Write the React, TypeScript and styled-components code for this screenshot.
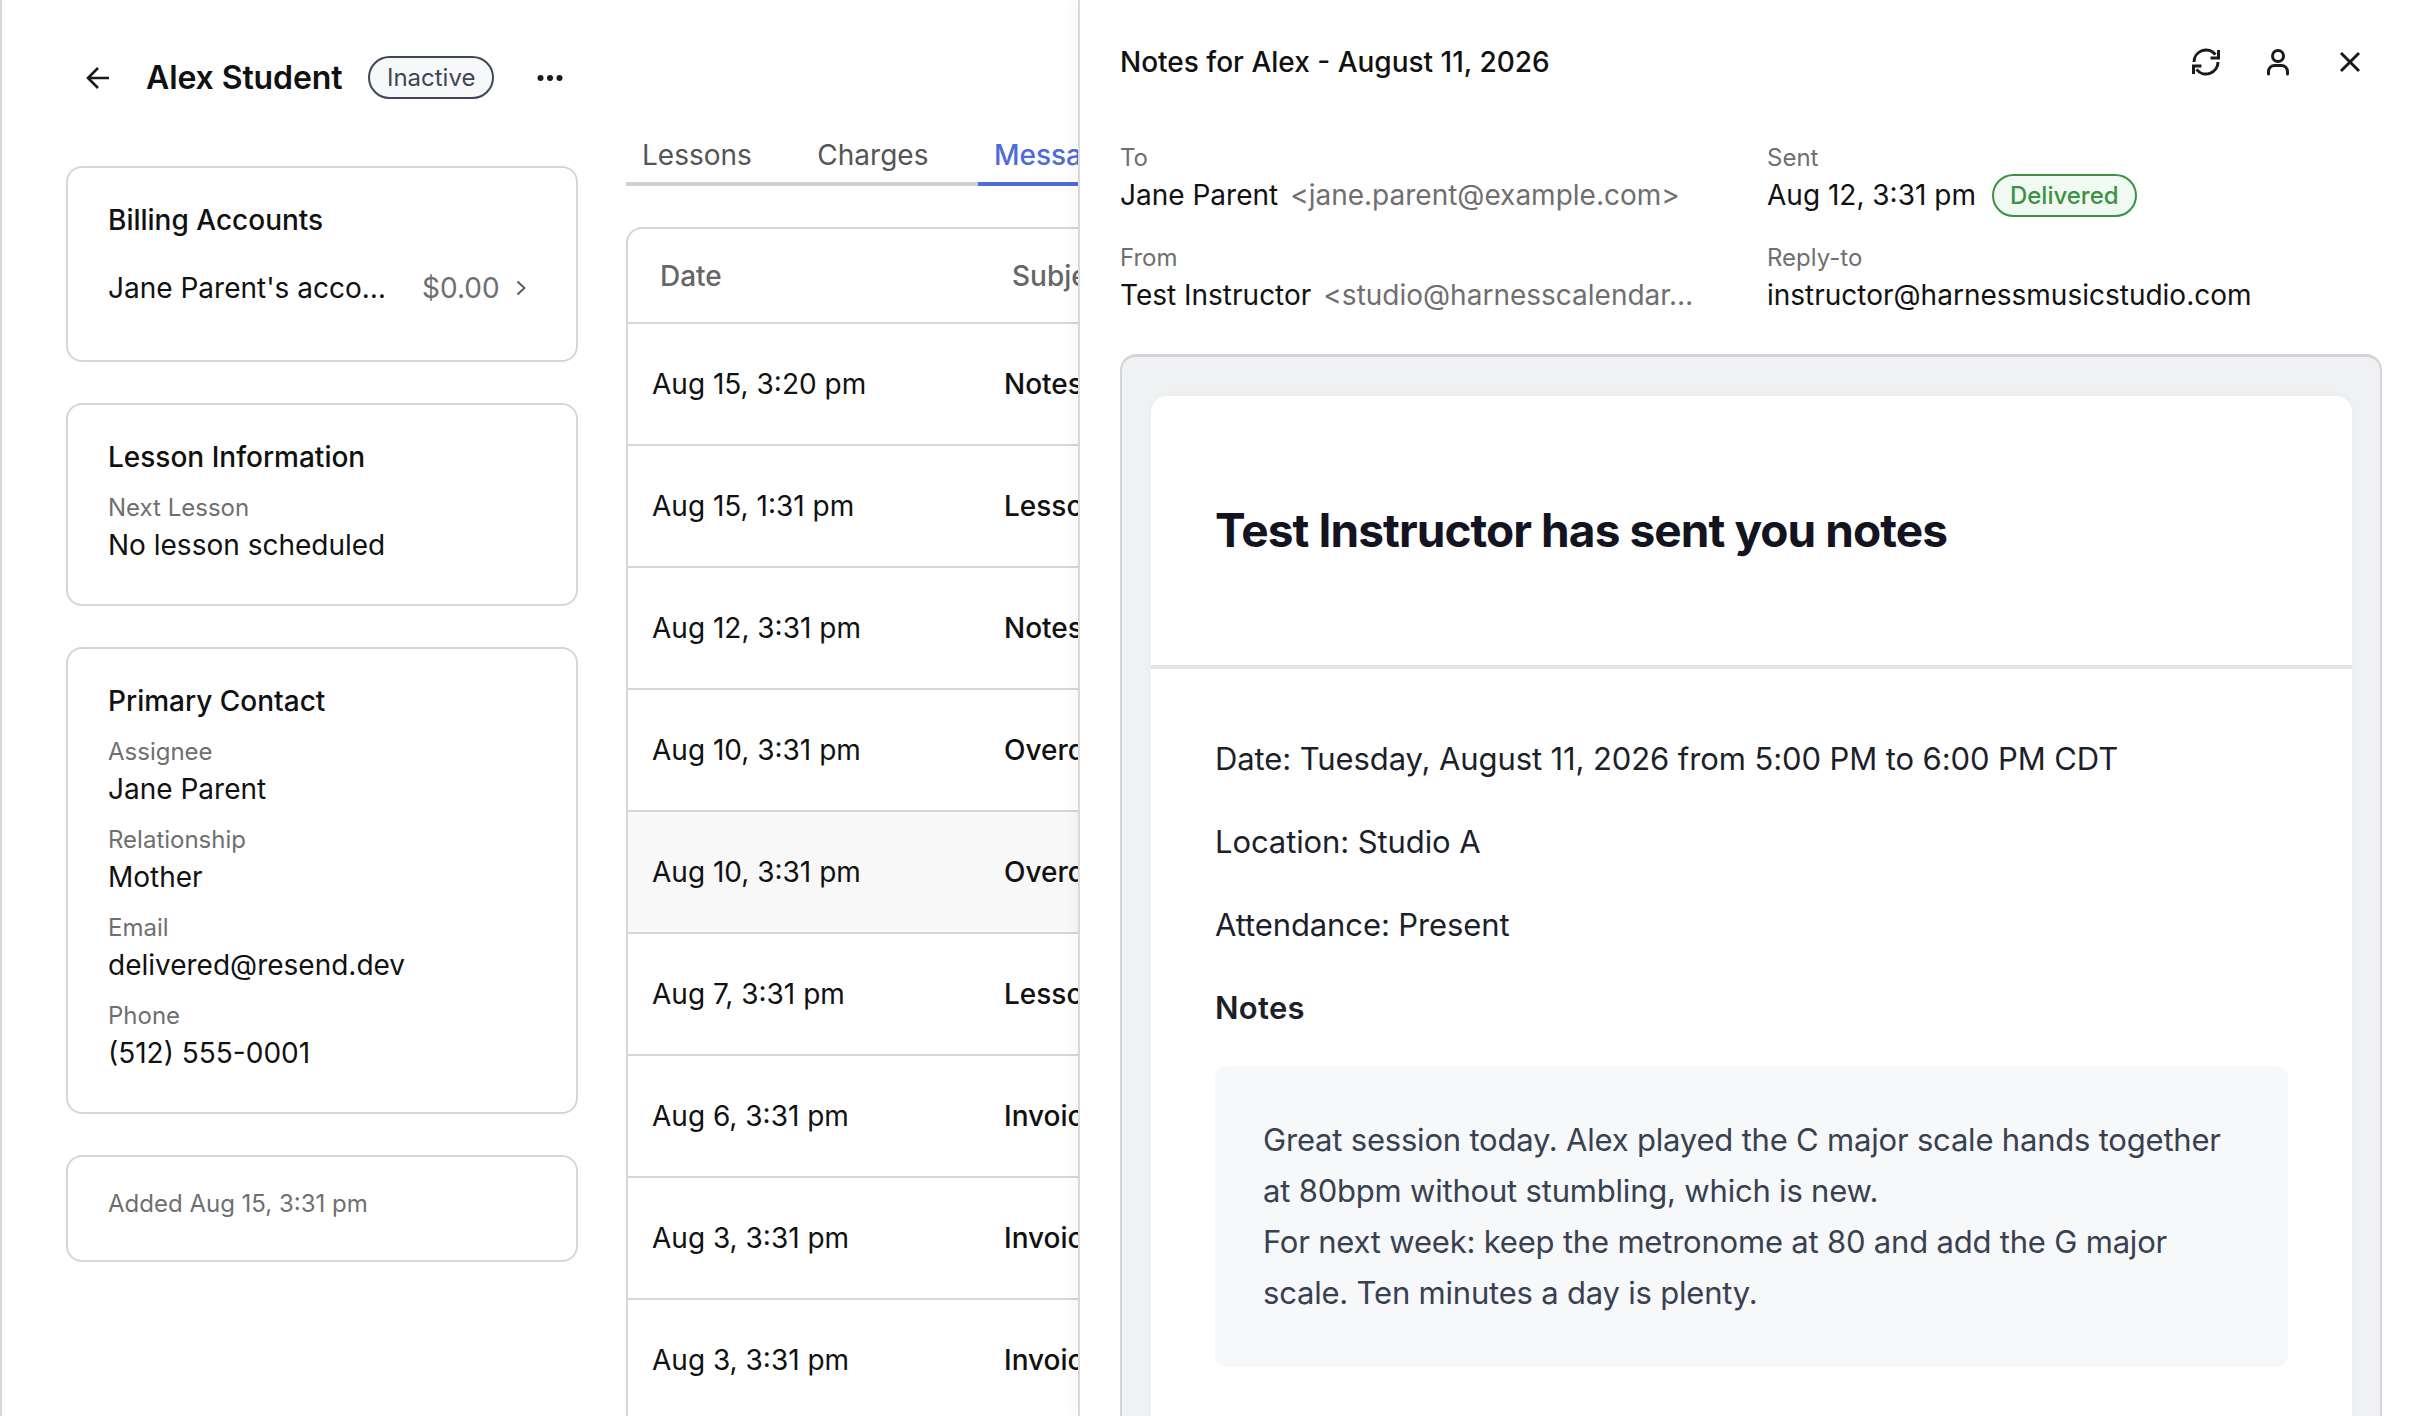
import React from "react";
import styled, { createGlobalStyle } from "styled-components";

const GlobalStyle = createGlobalStyle`
  * {
    box-sizing: border-box;
  }
  html,
  body {
    margin: 0;
    padding: 0;
    background: #fff;
    font-family: Inter, "Liberation Sans", sans-serif;
    color: #111;
  }
`;

const Page = styled.div`
  position: relative;
  width: 2418px;
  height: 1416px;
  overflow: hidden;
  background: #fff;
`;

const Main = styled.div`
  height: 100%;
  border-left: 2px solid #d6d6d6;
  padding: 56px 0 0 64px;
`;

const TitleRow = styled.div`
  display: flex;
  align-items: center;
  height: 43px;
`;

const BackBtn = styled.div`
  display: flex;
  align-items: center;
  width: 80px;
  padding-left: 20px;
`;

const Name = styled.div`
  font-size: 32px;
  font-weight: 600;
  letter-spacing: -0.1px;
  line-height: 43px;
  margin-right: 26px;
`;

const Badge = styled.div<{ $green?: boolean }>`
  display: inline-flex;
  align-items: center;
  justify-content: center;
  height: 43px;
  padding: 0 ${(p) => (p.$green ? 16 : 16.5)}px;
  border-radius: 22px;
  font-size: 24px;
  font-weight: ${(p) => (p.$green ? 500 : 400)};
  color: ${(p) => (p.$green ? "#3d9144" : "#3f4657")};
  background: ${(p) => (p.$green ? "#f0faf2" : "#f7f8fa")};
  border: 2.5px solid ${(p) => (p.$green ? "#3d9144" : "#3f4657")};
`;

const MoreBtn = styled.div`
  display: flex;
  margin-left: 43px;
`;

const Body = styled.div`
  display: flex;
  gap: 48px;
`;

const Sidebar = styled.div`
  width: 512px;
  flex: none;
  display: flex;
  flex-direction: column;
  gap: 41px;
  padding-top: 67px;
`;

const Card = styled.div`
  border: 2px solid #d6d6d6;
  border-radius: 16px;
  padding: 34px 40px 41px;
`;

const FootCard = styled(Card)`
  height: 107px;
  padding: 0 40px 10px;
  display: flex;
  align-items: center;
  font-size: 24px;
  color: #6f6f6f;
`;

const CardTitle = styled.div`
  font-size: 28px;
  font-weight: 500;
  line-height: 36px;
`;

const AccountRow = styled.div`
  display: flex;
  align-items: center;
  height: 36px;
  margin: 32px 0 13px;
  font-size: 28px;
`;

const AccountName = styled.div`
  width: 278px;
  flex: none;
  white-space: nowrap;
  overflow: hidden;
  text-overflow: ellipsis;
`;

const Amount = styled.div`
  margin-left: 36px;
  color: #6f6f6f;
`;

const Chevron = styled.svg`
  margin-left: 16px;
`;

const Field = styled.div`
  margin-top: 17px;
`;

const FieldLabel = styled.div`
  font-size: 24px;
  line-height: 32px;
  color: #6f6f6f;
`;

const FieldValue = styled.div`
  font-size: 28px;
  line-height: 36px;
  margin-top: 3px;
`;

const Content = styled.div`
  flex: 1;
  min-width: 0;
`;

const Tabs = styled.div`
  display: flex;
  margin-top: 31px;
  height: 56px;
  border-bottom: 4px solid #d0d0d0;
`;

const Tab = styled.div<{ $active?: boolean }>`
  height: 56px;
  padding: 0 16px;
  margin-right: 33.5px;
  font-size: 28px;
  font-weight: ${(p) => (p.$active ? 500 : 400)};
  line-height: 50px;
  color: ${(p) => (p.$active ? "#4f6bd8" : "#555")};
  ${(p) => (p.$active ? "border-bottom: 4px solid #4f6bd8;" : "")}
`;

const Table = styled.div`
  margin-top: 41px;
  width: 1100px;
  border: 2px solid #d6d6d6;
  border-bottom: none;
  border-radius: 16px 0 0 0;
`;

const HeadRow = styled.div`
  display: grid;
  grid-template-columns: 352px 1fr;
  height: 95px;
  padding-left: 32px;
  align-items: center;
  font-size: 28px;
  font-weight: 500;
  color: #666;
  border-bottom: 2px solid #d6d6d6;
`;

const Row = styled.div<{ $hover?: boolean }>`
  display: grid;
  grid-template-columns: 352px 1fr;
  height: 122px;
  padding-left: 24px;
  align-items: center;
  font-size: 28px;
  background: ${(p) => (p.$hover ? "#f8f8f8" : "#fff")};
  border-bottom: 2px solid #d6d6d6;
`;

const Subject = styled.div`
  font-weight: 500;
`;

const Panel = styled.div`
  position: absolute;
  top: 0;
  bottom: 0;
  left: 1078px;
  right: 0;
  background: #fff;
  border-left: 2px solid #d9d9d9;
  box-shadow: -5px 0 10px rgba(0, 0, 0, 0.03);
  padding: 48px 36px 0 40px;
  overflow: hidden;
`;

const PanelHead = styled.div`
  display: flex;
  align-items: center;
  justify-content: space-between;
  height: 28px;
  padding-right: 18px;
`;

const PanelTitle = styled.div`
  font-size: 28px;
  font-weight: 500;
`;

const IconGroup = styled.div`
  display: flex;
  gap: 44px;
`;

const Icon = styled.svg`
  display: block;
  fill: none;
  stroke: #1a1a1a;
  stroke-width: 3;
`;

const Meta = styled.div`
  display: grid;
  grid-template-columns: 578px auto;
  column-gap: 69px;
  row-gap: 29px;
  margin-top: 66px;
`;

const MetaValue = styled.div`
  display: flex;
  align-items: center;
  gap: 12px;
  height: 36px;
  margin-top: 3px;
  font-size: 28px;
  white-space: nowrap;
`;

const Address = styled.span`
  min-width: 0;
  overflow: hidden;
  text-overflow: ellipsis;
  color: #6f6f6f;
`;

const SentBadge = styled(Badge)`
  margin-left: 4px;
`;

const Frame = styled.div`
  margin-top: 41px;
  height: 1100px;
  padding: 39px 28px 0 29px;
  background: #f0f1f3;
  border: 2px solid #d4d4d6;
  border-top-width: 3px;
  border-bottom: none;
  border-radius: 16px 16px 0 0;
`;

const Mail = styled.div`
  height: 100%;
  background: #fff;
  border-radius: 16px 16px 0 0;
  box-shadow: 0 0 8px rgba(0, 0, 0, 0.03);
`;

const MailHead = styled.div`
  display: flex;
  align-items: center;
  height: 273px;
  padding: 0 64px 1px;
  border-bottom: 4px solid #e2e4ea;
`;

const MailTitle = styled.div`
  font-size: 46px;
  font-weight: 700;
  letter-spacing: -0.92px;
  color: #13141f;
`;

const MailBody = styled.div`
  padding: 70px 64px 0;
  color: #1d1f2b;
  font-size: 31px;
`;

const MailLine = styled.div<{ $bold?: boolean }>`
  line-height: 40px;
  margin-bottom: 43px;
  font-weight: ${(p) => (p.$bold ? 600 : 400)};
  letter-spacing: ${(p) => (p.$bold ? "0.3px" : "-0.1px")};
`;

const NoteBox = styled.div`
  margin-top: -5px;
  padding: 48px 48px 49px;
  background: #f7f8fa;
  border-radius: 12px;
  font-size: 31px;
  letter-spacing: -0.2px;
  line-height: 51px;
  color: #374151;
`;

const rows = [
  ["Aug 15, 3:20 pm", "Notes"],
  ["Aug 15, 1:31 pm", "Lesson"],
  ["Aug 12, 3:31 pm", "Notes"],
  ["Aug 10, 3:31 pm", "Overdue"],
  ["Aug 10, 3:31 pm", "Overdue"],
  ["Aug 7, 3:31 pm", "Lesson"],
  ["Aug 6, 3:31 pm", "Invoice"],
  ["Aug 3, 3:31 pm", "Invoice"],
  ["Aug 3, 3:31 pm", "Invoice"],
];

const contact = [
  ["Assignee", "Jane Parent"],
  ["Relationship", "Mother"],
  ["Email", "delivered@resend.dev"],
  ["Phone", "(512) 555-0001"],
];

const App: React.FC = () => {
  return (
    <Page>
      <GlobalStyle />
      <Main>
        <TitleRow>
          <BackBtn>
            <Icon width="24" height="24" viewBox="0 0 24 24" style={{ strokeWidth: 2.6 }}>
              <path d="M12 2 2 12l10 10M2 12h21" />
            </Icon>
          </BackBtn>
          <Name>Alex Student</Name>
          <Badge>Inactive</Badge>
          <MoreBtn>
            <svg width="26" height="8" viewBox="0 0 26 8" fill="#1a1a1a">
              <circle cx="3.5" cy="4" r="3" />
              <circle cx="13" cy="4" r="3" />
              <circle cx="22.5" cy="4" r="3" />
            </svg>
          </MoreBtn>
        </TitleRow>
        <Body>
          <Sidebar>
            <Card>
              <CardTitle>Billing Accounts</CardTitle>
              <AccountRow>
                <AccountName>Jane Parent's account</AccountName>
                <Amount>$0.00</Amount>
                <Chevron width="10" height="16" viewBox="0 0 10 16" fill="none" stroke="#555" strokeWidth="1.8">
                  <path d="m1.5 1.5 7 6.5-7 6.5" />
                </Chevron>
              </AccountRow>
            </Card>
            <Card>
              <CardTitle>Lesson Information</CardTitle>
              <Field>
                <FieldLabel>Next Lesson</FieldLabel>
                <FieldValue>No lesson scheduled</FieldValue>
              </Field>
            </Card>
            <Card>
              <CardTitle>Primary Contact</CardTitle>
              {contact.map(([label, value]) => (
                <Field key={label}>
                  <FieldLabel>{label}</FieldLabel>
                  <FieldValue>{value}</FieldValue>
                </Field>
              ))}
            </Card>
            <FootCard>Added Aug 15, 3:31 pm</FootCard>
          </Sidebar>
          <Content>
            <Tabs>
              <Tab>Lessons</Tab>
              <Tab>Charges</Tab>
              <Tab $active>Messages</Tab>
            </Tabs>
            <Table>
              <HeadRow>
                <div>Date</div>
                <div>Subject</div>
              </HeadRow>
              {rows.map(([date, subject], i) => (
                <Row key={i} $hover={i === 4}>
                  <div>{date}</div>
                  <Subject>{subject}</Subject>
                </Row>
              ))}
            </Table>
          </Content>
        </Body>
      </Main>
      <Panel>
        <PanelHead>
          <PanelTitle>Notes for Alex - August 11, 2026</PanelTitle>
          <IconGroup>
            <Icon width="28" height="28" viewBox="0 0 28 28">
              <path d="M26 14a12 12 0 0 1-21.5 7.3M2 14a12 12 0 0 1 21.5-7.3" />
              <path d="M26.5 2v8h-8M1.5 26v-8h8" />
            </Icon>
            <Icon width="28" height="28" viewBox="0 0 28 28" strokeLinecap="round">
              <circle cx="14" cy="8" r="5.5" />
              <path d="M4.5 26v-2.5a6 6 0 0 1 6-6h7a6 6 0 0 1 6 6V26" />
            </Icon>
            <Icon width="28" height="28" viewBox="0 0 28 28">
              <path d="m5 5 18 18M23 5 5 23" />
            </Icon>
          </IconGroup>
        </PanelHead>
        <Meta>
          <div>
            <FieldLabel>To</FieldLabel>
            <MetaValue>
              <span>Jane Parent</span>
              <Address>&lt;jane.parent@example.com&gt;</Address>
            </MetaValue>
          </div>
          <div>
            <FieldLabel>Sent</FieldLabel>
            <MetaValue>
              <span>Aug 12, 3:31 pm</span>
              <SentBadge $green>Delivered</SentBadge>
            </MetaValue>
          </div>
          <div>
            <FieldLabel>From</FieldLabel>
            <MetaValue>
              <span>Test Instructor</span>
              <Address>&lt;studio@harnesscalendar.com&gt;</Address>
            </MetaValue>
          </div>
          <div>
            <FieldLabel>Reply-to</FieldLabel>
            <MetaValue>instructor@harnessmusicstudio.com</MetaValue>
          </div>
        </Meta>
        <Frame>
          <Mail>
            <MailHead>
              <MailTitle>Test Instructor has sent you notes</MailTitle>
            </MailHead>
            <MailBody>
              <MailLine>Date: Tuesday, August 11, 2026 from 5:00 PM to 6:00 PM CDT</MailLine>
              <MailLine>Location: Studio A</MailLine>
              <MailLine>Attendance: Present</MailLine>
              <MailLine $bold>Notes</MailLine>
              <NoteBox>
                Great session today. Alex played the C major scale hands together at 80bpm without stumbling, which is new.
                <br />
                For next week: keep the metronome at 80 and add the G major scale. Ten minutes a day is plenty.
              </NoteBox>
            </MailBody>
          </Mail>
        </Frame>
      </Panel>
    </Page>
  );
};

export default App;
